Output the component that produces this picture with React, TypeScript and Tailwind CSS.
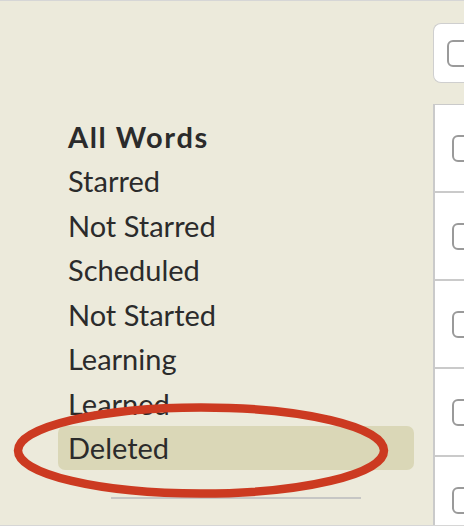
const filters = [
  'All Words',
  'Starred',
  'Not Starred',
  'Scheduled',
  'Not Started',
  'Learning',
  'Learned',
  'Deleted',
];

const Checkbox = () => (
  <div className="size-[27px] shrink-0 rounded-[6px] border-2 border-[#9a9a9a] bg-white"></div>
);

export default function App() {
  const active = 'Deleted';

  return (
    <div className="relative flex h-[526px] w-[464px] overflow-hidden border-y border-[#d6d6d6] bg-[#eceadb] font-['Lato',sans-serif] text-[#2b2b2b]">
      {/* Sidebar filters */}
      <div className="w-[433px] shrink-0 pl-[58px] pt-[113px]">
        <div className="w-[356px]">
          {filters.map((label) => (
            <div
              key={label}
              className={
                'flex h-[44.5px] items-center rounded-[7px] pl-[10px] text-[29px] ' +
                (label === active ? 'bg-[#dad7b7] ' : '') +
                (label === 'All Words' ? 'font-bold tracking-[1.6px]' : '')
              }
            >
              {label}
            </div>
          ))}
          <div className="mx-auto mt-[27px] h-[2px] w-[250px] bg-[#c6c6c4]"></div>
        </div>
      </div>

      {/* Word list (cut off) */}
      <div className="flex-1 pt-[22px]">
        <div className="flex h-[60px] items-center rounded-l-[8px] border border-r-0 border-[#cfcfcf] bg-white pl-[13px]">
          <Checkbox />
        </div>
        <div className="mt-[21px] border-l-2 border-t border-[#cacaca] bg-white">
          {Array.from({ length: 5 }).map((_, i) => (
            <div
              key={i}
              className="flex h-[88px] items-center border-b-2 border-[#cacaca] pl-[17px]"
            >
              <Checkbox />
            </div>
          ))}
        </div>
      </div>

      {/* Annotation circle */}
      <svg
        className="pointer-events-none absolute left-0 top-0"
        width="464"
        height="526"
        viewBox="0 0 464 526"
      >
        <ellipse
          cx="201"
          cy="449.5"
          rx="183"
          ry="43"
          fill="none"
          stroke="#cc3a21"
          strokeWidth="8.5"
        />
      </svg>
    </div>
  );
}
